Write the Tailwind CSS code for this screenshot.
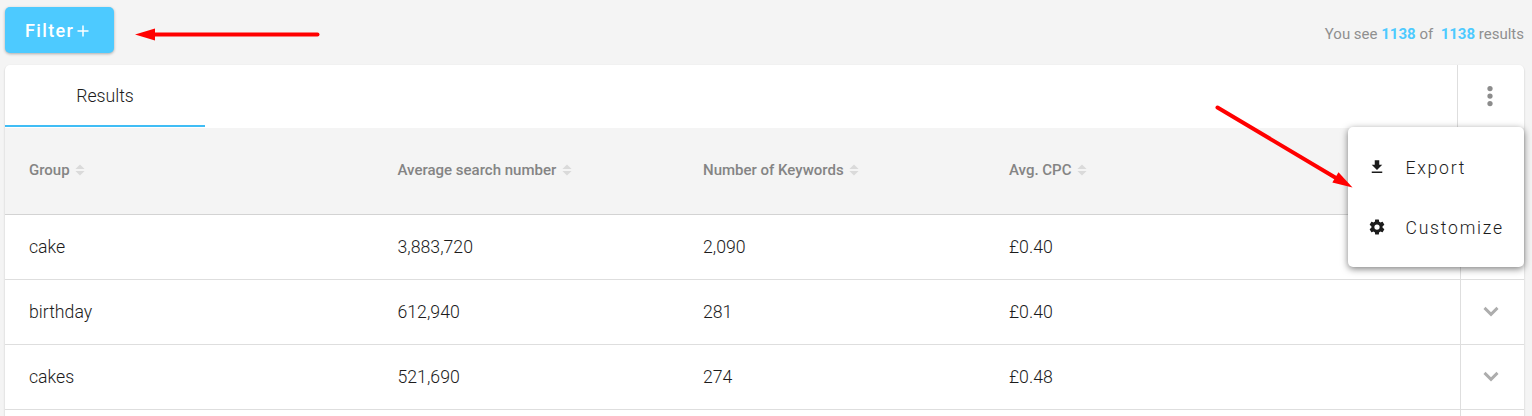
<!doctype html>
<html lang="en">
    <head>
        <meta charset="UTF-8">

        <title>Results</title>

        <!-- TAILWIND -->
        <script src="https://cdn.jsdelivr.net/npm/@tailwindcss/browser@4"></script>
    </head>
    <body class="relative h-[416px] overflow-hidden bg-[#f4f4f4] font-['Roboto',sans-serif]">

        <!-- ICONS -->
        <svg class="hidden">
            <symbol id="sort" viewBox="0 0 10 12">
                <path d="M5 .5L9.600 5H.4zM5 11.500L.4 7h9.200z" fill="currentColor"/>
            </symbol>
            <symbol id="chevron" viewBox="0 0 24 24">
                <path d="M6.800 8.700L12 13.900l5.200-5.200" fill="none" stroke="currentColor" stroke-width="2.300"/>
            </symbol>
        </svg>

        <!-- TOOLBAR -->
        <div class="flex justify-between h-[65px] pl-[5px] pr-2 pt-[7px]">
            <button class="flex items-center w-[109px] h-[46px] pl-5 rounded-[5px] bg-[#4dcaff] text-white text-[18px] font-medium tracking-[1.35px] shadow-[0_1px_3px_rgba(0,0,0,0.3)]">
                Filter
                <svg class="mt-[2px] ml-[3px] size-[12px]" viewBox="0 0 12 12"><path d="M6 .5v11M.5 6h11" stroke="currentColor" stroke-width="1.500"/></svg>
            </button>
            <p class="pt-[16px] text-[15px] leading-[22px] text-[#8f8f8f] whitespace-pre">You see <b class="text-[#4dcaff]">1138</b> of  <b class="text-[#4dcaff]">1138</b> results</p>
        </div>

        <!-- CARD -->
        <div class="ml-[5px] mr-2 h-[351px] rounded-t-[5px] bg-white text-[17.7px] font-[340] text-[#1c1c1c] shadow-[0_1px_2px_rgba(0,0,0,0.22)]">

            <!-- TABS -->
            <div class="flex justify-between h-[63px]">
                <div class="flex items-center justify-center w-[200px] h-[62px] pt-[2px] border-b-2 border-[#40bdf5]">Results</div>
                <div class="flex items-center justify-center w-[67px] pb-[2px] border-l border-[#dedede] text-[#8c8c8c]">
                    <svg class="size-[30px] -ml-[2px]" viewBox="0 0 24 24" fill="currentColor">
                        <circle cx="12" cy="6" r="2.100"/>
                        <circle cx="12" cy="12" r="2.100"/>
                        <circle cx="12" cy="18" r="2.100"/>
                    </svg>
                </div>
            </div>

            <!-- HEADER -->
            <div class="grid grid-cols-[368.5px_305.5px_306px_1fr] items-center h-[87px] pl-6 pb-[2px] border-b border-[#d3d3d3] bg-[#f4f4f4] text-[15px] font-medium text-[#848484]">
                <div class="flex items-center gap-[5.5px]">Group <svg class="w-[10px] h-3 mb-px text-[#dadada]"><use href="#sort"/></svg></div>
                <div class="flex items-center gap-[5.5px]">Average search number <svg class="w-[10px] h-3 mb-px text-[#dadada]"><use href="#sort"/></svg></div>
                <div class="flex items-center gap-[5.5px]">Number of Keywords <svg class="w-[10px] h-3 mb-px text-[#dadada]"><use href="#sort"/></svg></div>
                <div class="flex items-center gap-[5.5px]">Avg. CPC <svg class="w-[10px] h-3 mb-px text-[#dadada]"><use href="#sort"/></svg></div>
            </div>

            <!-- ROWS -->
            <div class="grid grid-cols-[368.5px_305.5px_306px_1fr_64px] items-center h-[65px] pl-6 border-b border-[#dedede]">
                <div>cake</div>
                <div>3,883,720</div>
                <div>2,090</div>
                <div>£0.40</div>
                <div class="flex items-center justify-center h-full pr-[3px] border-l border-[#dedede] text-[#adadad]"><svg class="size-[30px]"><use href="#chevron"/></svg></div>
            </div>
            <div class="grid grid-cols-[368.5px_305.5px_306px_1fr_64px] items-center h-[65px] pl-6 border-b border-[#dedede]">
                <div>birthday</div>
                <div>612,940</div>
                <div>281</div>
                <div>£0.40</div>
                <div class="flex items-center justify-center h-full pr-[3px] border-l border-[#dedede] text-[#adadad]"><svg class="size-[30px]"><use href="#chevron"/></svg></div>
            </div>
            <div class="grid grid-cols-[368.5px_305.5px_306px_1fr_64px] items-center h-[65px] pl-6 border-b border-[#dedede]">
                <div>cakes</div>
                <div>521,690</div>
                <div>274</div>
                <div>£0.48</div>
                <div class="flex items-center justify-center h-full pr-[3px] border-l border-[#dedede] text-[#adadad]"><svg class="size-[30px]"><use href="#chevron"/></svg></div>
            </div>
            <div class="flex justify-end h-[6px]">
                <div class="w-16 border-l border-[#dedede]"></div>
            </div>
        </div>

        <!-- MENU -->
        <div class="absolute left-[1348px] top-[127px] w-[176px] h-[140px] pt-[11px] rounded-[5px] bg-white text-[17.6px] font-[340] tracking-[1.76px] text-[#1c1c1c] shadow-[0_2px_7px_rgba(0,0,0,0.5)]">
            <div class="flex items-center h-[60px] pl-5">
                <svg class="size-[18px] mr-[19.5px] mb-[2px]" viewBox="0 0 24 24" fill="currentColor"><path d="M5 20h14v-2H5m14-9h-4V3H9v6H5l7 7z"/></svg>
                Export
            </div>
            <div class="flex items-center h-[60px] pl-5">
                <svg class="size-[18px] mr-[19.5px] mb-[2px]" viewBox="0 0 24 24" fill="currentColor"><path d="M12 15.500A3.500 3.500 0 0 1 8.500 12 3.500 3.500 0 0 1 12 8.500a3.500 3.500 0 0 1 3.500 3.500 3.500 3.500 0 0 1-3.500 3.500m7.430-2.530c.04-.32.07-.64.07-.97s-.03-.66-.07-1l2.110-1.630c.19-.15.24-.42.12-.64l-2-3.460c-.12-.22-.39-.31-.61-.22l-2.490 1c-.52-.39-1.060-.73-1.690-.98l-.37-2.650A.506.506 0 0 0 14 2h-4c-.25 0-.46.18-.5.42l-.37 2.650c-.63.25-1.170.59-1.690.98l-2.490-1c-.22-.09-.49 0-.61.22l-2 3.460c-.13.22-.07.49.12.64L4.570 11c-.04.34-.07.67-.07 1s.03.65.07.97l-2.110 1.660c-.19.15-.25.42-.12.64l2 3.460c.12.22.39.3.61.22l2.490-1.010c.52.4 1.060.74 1.690.99l.37 2.650c.04.24.25.42.5.42h4c.25 0 .46-.18.5-.42l.37-2.650c.63-.26 1.170-.59 1.690-.99l2.490 1.010c.22.08.49 0 .61-.22l2-3.460c.12-.22.07-.49-.12-.64z"/></svg>
                Customize
            </div>
        </div>

        <!-- ARROWS -->
        <svg class="absolute inset-0 w-[1532px] h-[416px]" fill="#f00" stroke="#f00">
            <path d="M152 34.500H317.500" stroke-width="4" stroke-linecap="round"/>
            <path d="M135 34.500L155 28.500V40.500z" stroke="none"/>
            <path d="M1217.500 107.500L1336 178" stroke-width="4" stroke-linecap="round"/>
            <path d="M1352.500 187.500L1338.500 172.300L1332.300 182.500z" stroke="none"/>
        </svg>
    </body>
</html>
